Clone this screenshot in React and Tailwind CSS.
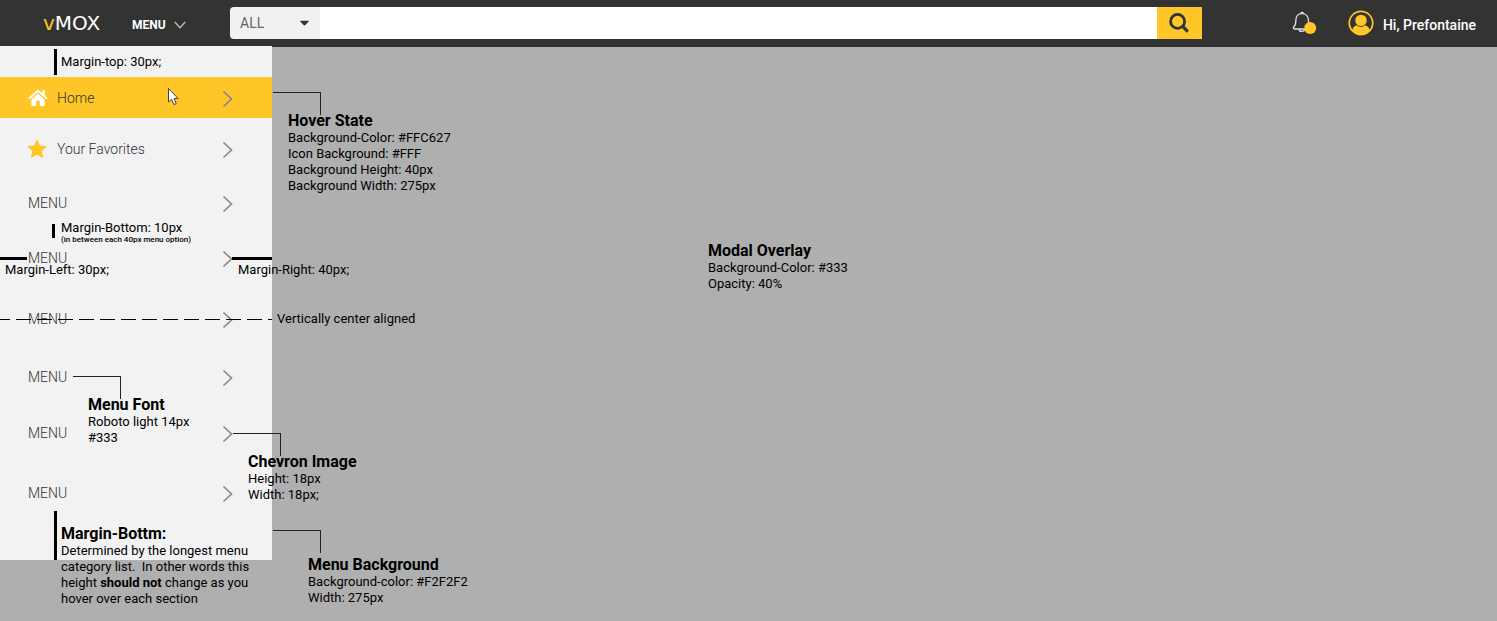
import React from "react";
import { FaCaretDown } from "react-icons/fa";

function Chevron({ className }) {
  return (
    <svg viewBox="0 0 18 18" className={className} fill="none" stroke="currentColor" strokeWidth="1.7" aria-hidden="true">
      <path d="M4.5 1.5 L12.5 9 L4.5 16.5" />
    </svg>
  );
}

function MenuArrow() {
  return (
    <svg viewBox="0 0 12 12" className="size-3" fill="none" stroke="#bbb" strokeWidth="1.4" aria-hidden="true">
      <path d="M0.8 3 L6 8.8 L11.2 3" />
    </svg>
  );
}

function HomeIcon({ className }) {
  return (
    <svg viewBox="0 0 20 20" className={className} fill="currentColor" aria-hidden="true">
      <path d="M10 1.6 L0.4 9.8 L1.7 11.3 L10 4.3 L18.3 11.3 L19.6 9.8 L17 7.5 V2.2 H14.3 V5.2 Z" />
      <path d="M10 5.8 L3.4 11.4 V17.2 Q3.4 18 4.2 18 H8.2 V12.8 H11.8 V18 H15.8 Q16.6 18 16.6 17.2 V11.4 Z" />
    </svg>
  );
}

function StarIcon({ className }) {
  return (
    <svg viewBox="0 0 20 20" className={className} fill="currentColor" stroke="currentColor" strokeLinejoin="round" aria-hidden="true">
      <path d="M10 1.2 L12.6 7 L19 7.7 L14.2 12 L15.6 18.4 L10 15.1 L4.4 18.4 L5.8 12 L1 7.7 L7.4 7 Z" />
    </svg>
  );
}

function SearchIcon() {
  return (
    <svg viewBox="0 0 20 20" className="size-5" fill="none" stroke="currentColor" aria-hidden="true">
      <circle cx="8.6" cy="8.4" r="7" strokeWidth="2.8" />
      <path d="M13.4 13.2 L18.8 18.6" strokeWidth="3.2" />
    </svg>
  );
}

function BellIcon() {
  return (
    <svg viewBox="0 0 25 24" className="h-6 w-[25px]" fill="none" aria-hidden="true">
      <g stroke="#e0e0e0" strokeWidth="1.3" strokeLinejoin="round">
        <path d="M10 2.6 C6 2.6 3.9 5.6 3.9 9 C3.9 12.4 3.6 14.2 1.8 16 C1 17 1.4 18 2.4 18 H17.6 C18.6 18 19 17 18.2 16 C16.8 14.2 16.3 12.4 16.3 9 C16.3 5.6 14 2.6 10 2.6 Z" />
        <path d="M8.6 2.6 C8.6 0.9 11.6 0.9 11.6 2.6" />
        <path d="M7 18.4 C7.2 21 12.4 21 12.8 18.4" />
      </g>
      <circle cx="18.2" cy="17" r="6" fill="#ffc627" />
    </svg>
  );
}

function UserIcon() {
  return (
    <svg viewBox="0 0 26 26" className="size-[26px]" aria-hidden="true">
      <circle cx="13" cy="13" r="11.7" fill="#333" stroke="#ffc627" strokeWidth="1.7" />
      <circle cx="13" cy="10.4" r="5.7" fill="#ffc627" />
      <path d="M4 20.2 C5 17.4 7 15.6 9 15.3 C11.5 17.6 14.5 17.6 17 15.3 C19 15.6 21 17.4 22 20.2 C19.8 23.4 16.6 25 13 25 C9.4 25 6.2 23.4 4 20.2 Z" fill="#ffc627" />
    </svg>
  );
}

function Header() {
  return (
    <header className="flex h-[47px] items-center bg-[#333] pr-[21px] pb-px pl-[43px] text-white">
      <a href="#" className="w-[89px] font-['DejaVu_Sans',sans-serif] text-xl leading-6">
        <span className="text-[#ffc627]">v</span>MOX
      </a>
      <button type="button" className="flex w-[98px] items-center gap-2 pt-[3px] text-xs font-bold">
        MENU
        <MenuArrow />
      </button>
      <form role="search" className="flex h-8 min-w-0 flex-1" onSubmit={(e) => e.preventDefault()}>
        <div className="relative w-[90px] shrink-0">
          <select aria-label="Category" className="size-full appearance-none rounded-l-sm bg-[#f1f1f1] pl-[10px] text-sm text-[#666]">
            <option>ALL</option>
          </select>
          <FaCaretDown className="pointer-events-none absolute top-2 right-2 size-[15px] text-[#333]" />
        </div>
        <input type="text" aria-label="Search" className="min-w-0 flex-1 bg-white px-3 text-sm text-[#333]" />
        <button type="submit" aria-label="Search" className="flex w-[45px] items-center justify-center bg-[#ffc627] text-[#333]">
          <SearchIcon />
        </button>
      </form>
      <button type="button" aria-label="Notifications" className="ml-[90px]">
        <BellIcon />
      </button>
      <a href="#" className="ml-[31px] flex items-center gap-[9px] text-sm font-medium">
        <UserIcon />
        <span className="pt-[3px]">Hi, Prefontaine</span>
      </a>
    </header>
  );
}

const items = [
  { label: "Home", icon: HomeIcon, active: true, space: "mt-[31px] h-[41px]" },
  { label: "Your Favorites", icon: StarIcon, space: "mt-[11px] h-10" },
  { label: "MENU", space: "mt-[14px] h-10" },
  { label: "MENU", space: "mt-[15px] h-10" },
  { label: "MENU", space: "mt-[21px] h-10" },
  { label: "MENU", space: "mt-[18px] h-10" },
  { label: "MENU", space: "mt-4 h-10" },
  { label: "MENU", space: "mt-5 h-10" },
];

function SideMenu() {
  return (
    <nav aria-label="Main menu" className="-mt-px flow-root w-[272px] bg-[#f2f2f2] pb-[47px]">
      <ul className="flex flex-col">
        {items.map(({ label, icon: Icon, active, space }, i) => (
          <li key={i} className={space}>
            <a
              href="#"
              className={
                "flex h-full items-center pr-[35px] text-sm font-light text-[#333] " +
                (active ? "bg-[#ffc627] pl-7" : Icon ? "pl-[27px]" : "pl-7")
              }
            >
              {Icon && (
                <Icon className={"size-5 shrink-0 " + (active ? "mr-[9px] text-white" : "mr-[10px] text-[#ffc627]")} />
              )}
              <span className="flex-1">{label}</span>
              <Chevron className="mt-0.5 size-[18px] text-[#888]" />
            </a>
          </li>
        ))}
      </ul>
    </nav>
  );
}

function Note({ title, lines }) {
  return (
    <div className="text-[13px] leading-4 whitespace-pre text-black">
      {title && <h2 className="text-base leading-[18px] font-bold">{title}</h2>}
      {lines.map((line, i) => (
        <p key={i}>{line}</p>
      ))}
    </div>
  );
}

function Callout({ place, inset = "-mt-[3px] pl-[15px]", ...note }) {
  return (
    <section className={"absolute flex flex-col " + place}>
      <div className="h-[23px] w-12 border-t border-r border-[#222]" />
      <div className={inset}>
        <Note {...note} />
      </div>
    </section>
  );
}

function Annotations() {
  return (
    <div className="pointer-events-none absolute top-0 left-0">
      <section className="absolute top-[49px] left-[54px] flex items-center gap-1">
        <div className="h-[26px] w-[3px] bg-black" />
        <Note lines={["Margin-top: 30px;"]} />
      </section>

      <Callout
        place="top-[92px] left-[273px]"
        title="Hover State"
        lines={["Background-Color: #FFC627", "Icon Background: #FFF", "Background Height: 40px", "Background Width: 275px"]}
      />

      <section className="absolute top-[220px] left-[52px] flex items-start gap-[6px]">
        <div className="mt-1 h-[14px] w-[3px] bg-black" />
        <div>
          <Note lines={["Margin-Bottom: 10px"]} />
          <p className="-mt-px text-[8px] leading-[9px] font-medium whitespace-pre text-black">
            (in between each 40px menu option)
          </p>
        </div>
      </section>

      <section className="absolute top-[257px] left-0 flex flex-col gap-[2px]">
        <div className="h-[3px] w-[27px] bg-black" />
        <div className="pl-[5px]">
          <Note lines={["Margin-Left: 30px;"]} />
        </div>
      </section>

      <section className="absolute top-[257px] left-[232px] flex flex-col gap-[2px]">
        <div className="h-[3px] w-10 bg-black" />
        <div className="pl-[6px]">
          <Note lines={["Margin-Right: 40px;"]} />
        </div>
      </section>

      <section className="absolute top-[311px] left-0 flex items-center gap-[5px]">
        <svg className="h-px w-[272px]" aria-hidden="true">
          <path d="M-5 0.5 H272" stroke="#000" strokeDasharray="15 6" />
        </svg>
        <Note lines={["Vertically center aligned"]} />
      </section>

      <Callout place="top-[376px] left-[73px]" title="Menu Font" lines={["Roboto light 14px", "#333"]} />

      <Callout place="top-[433px] left-[233px]" title="Chevron Image" lines={["Height: 18px", "Width: 18px;"]} />

      <section className="absolute top-[511px] left-[54px] flex items-start gap-1">
        <div className="h-[49px] w-[3px] bg-black" />
        <div className="pt-[14px]">
          <Note
            title="Margin-Bottm:"
            lines={[
              "Determined by the longest menu",
              "category list.  In other words this",
              <>
                height <strong>should not</strong> change as you
              </>,
              "hover over each section",
            ]}
          />
        </div>
      </section>

      <Callout
        place="top-[530px] left-[273px]"
        inset="pt-[3px] pl-[35px]"
        title="Menu Background"
        lines={["Background-color: #F2F2F2", "Width: 275px"]}
      />

      <section className="absolute top-[242px] left-[708px]">
        <Note title="Modal Overlay" lines={["Background-Color: #333", "Opacity: 40%"]} />
      </section>

      <svg className="absolute top-[87px] left-[167px] h-5 w-3" viewBox="0 0 12 20" aria-hidden="true">
        <path
          d="M1.5 1.5 V15 L4.6 12.2 L6.8 17.6 L9.2 16.6 L7 11.4 H11 Z"
          fill="#fff"
          stroke="#444"
          strokeWidth="1"
        />
      </svg>
    </div>
  );
}

export default function App() {
  return (
    <div className="relative min-h-screen overflow-hidden bg-[#afafaf] font-[Roboto,sans-serif]">
      <Header />
      <SideMenu />
      <Annotations />
    </div>
  );
}
